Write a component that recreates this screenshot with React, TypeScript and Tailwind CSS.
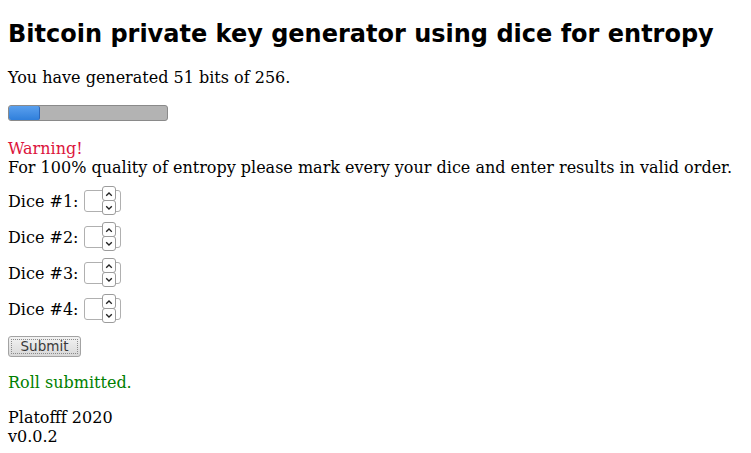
import React from "react";

function Chevron({ dir }: { dir: "up" | "down" }) {
  return (
    <svg width="8" height="6" viewBox="0 0 8 6" className="block">
      {dir === "up" ? (
        <path d="M1.2 4.8 L4 2 L6.8 4.8" fill="none" stroke="#222" strokeWidth="1.3" />
      ) : (
        <path d="M1.2 1.2 L4 4 L6.8 1.2" fill="none" stroke="#222" strokeWidth="1.3" />
      )}
    </svg>
  );
}

function NumInput() {
  return (
    <div className="relative ml-[6px] w-[37px] h-[22px] shrink-0">
      <div className="absolute inset-0 rounded-[3px] border border-[#b0b0b0] bg-white" />
      <div className="absolute left-[18px] top-[-4px] w-[14px] h-[15px] rounded-[3px] border border-[#9c9c9c] bg-white flex items-center justify-center">
        <Chevron dir="up" />
      </div>
      <div className="absolute left-[18px] top-[10px] w-[14px] h-[15px] rounded-[3px] border border-[#9c9c9c] bg-white flex items-center justify-center">
        <Chevron dir="down" />
      </div>
    </div>
  );
}

export default function App() {
  const bits = 51;
  const total = 256;
  return (
    <div className="min-h-[453px] bg-white px-2 pt-[20px] font-['DejaVu_Serif',serif] text-[16px] leading-[normal] text-black">
      <h2 className="font-['DejaVu_Sans',sans-serif] text-[24px] font-bold leading-[28px]">
        Bitcoin private key generator using dice for entropy
      </h2>
      <p className="mt-[20px] h-[19px]">You have generated {bits} bits of {total}.</p>
      <div className="mt-[18px] w-[160px] h-[16px] rounded-[3px] border border-[#8a8a8a] bg-[#b3b3b3] overflow-hidden">
        <div
          className="h-full rounded-[2px] border-r border-[#2c66b8] bg-gradient-to-b from-[#5aa0ee] to-[#2f7fdb]"
          style={{ width: `${(bits / total) * 160 - 1}px` }}
        />
      </div>
      <div className="mt-[18px]">
        <div className="h-[19px] text-[#dc143c]">Warning!</div>
        <div className="h-[19px]">
          For 100% quality of entropy please mark every your dice and enter results in valid order.
        </div>
      </div>
      <div className="mt-[14px] flex flex-col gap-[16px]">
        {[1, 2, 3, 4].map((n) => (
          <div key={n} className="flex items-center h-[20px]">
            <span>Dice #{n}:</span>
            <NumInput />
          </div>
        ))}
      </div>
      <button className="mt-[17px] block w-[73px] h-[21px] rounded-[3px] border border-[#a3a3a3] bg-gradient-to-b from-[#f2f2f2] to-[#d8d8d8] p-[2px]">
        <div className="h-full w-full border border-dotted border-[#8a8a8a] flex items-center justify-center font-['DejaVu_Sans',sans-serif] text-[13.5px] leading-none text-[#3a3a3a]">
          Submit
        </div>
      </button>
      <p className="mt-[16px] h-[19px] text-[#008000]">Roll submitted.</p>
      <div className="mt-[16px]">
        <div className="h-[19px]">Platofff 2020</div>
        <div className="h-[19px]">v0.0.2</div>
      </div>
    </div>
  );
}
